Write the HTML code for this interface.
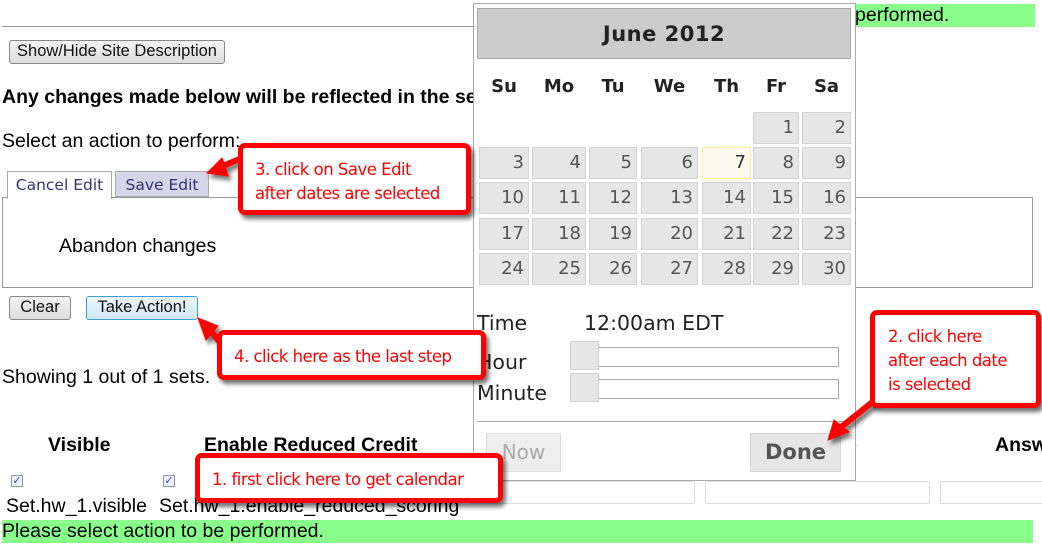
<!DOCTYPE html>
<html><head><style>
*{margin:0;padding:0;box-sizing:border-box}
body{width:1042px;height:555px;background:#fff;position:relative;overflow:hidden;font-family:"Liberation Sans",Arial,sans-serif;color:#000}
.a{position:absolute;white-space:nowrap}
.btn{position:absolute;border:1px solid #888;border-radius:3px;background:linear-gradient(#f4f4f4,#dcdcdc);font-size:16px;text-align:center;line-height:21px;color:#111}
.cal{position:absolute;left:473px;top:3px;width:383px;height:478px;border:1px solid #aaa;background:#fff}
.cell{position:absolute;background:#e6e6e6;border:1px solid #d3d3d3;color:#555;font-family:"DejaVu Sans",sans-serif;font-size:18px;text-align:right;padding-right:4px;line-height:29px}
.dn{position:absolute;top:72px;font-family:"DejaVu Sans",sans-serif;font-weight:bold;font-size:18px;color:#222;text-align:center}
.co{position:absolute;border:5px solid #f00;border-radius:7px;background:#fff;box-shadow:3px 4px 4px rgba(0,0,0,.55);color:#f00;font-size:16.5px;line-height:24px;font-family:"DejaVu Sans","Liberation Sans",sans-serif;letter-spacing:-0.5px}
.t{font-size:19.5px}
</style></head><body>
<div class="a" style="left:2px;top:26px;width:1033px;height:1px;background:#999"></div>
<div class="a" style="left:855px;top:4px;width:180px;height:23px;background:#8afe8a;font-size:19.5px;line-height:23px">performed.</div>
<div class="btn" style="left:9px;top:40px;width:216px;height:24px;font-size:16.5px">Show/Hide Site Description</div>
<div class="a t" style="left:2px;top:86px;font-weight:bold">Any changes made below will be reflected in the set</div>
<div class="a t" style="left:2px;top:130px">Select an action to perform:</div>
<div class="a" style="left:2px;top:197px;width:1031px;height:91px;border:1px solid #999"></div>
<div class="a" style="left:7px;top:171px;width:105px;height:28px;border:1px solid #aaa;border-bottom:none;background:#fff;color:#33337a;font-size:15.5px;text-align:center;line-height:27px;font-family:'DejaVu Sans',sans-serif">Cancel Edit</div>
<div class="a" style="left:115px;top:171px;width:94px;height:26px;border:1px solid #aaa;background:#d6d6ea;color:#33337a;font-size:15.5px;text-align:center;line-height:26px;font-family:'DejaVu Sans',sans-serif">Save Edit</div>
<div class="a t" style="left:59px;top:235px">Abandon changes</div>
<div class="btn" style="left:9px;top:296px;width:62px;height:24px;font-size:16.5px">Clear</div>
<div class="btn" style="left:86px;top:296px;width:112px;height:24px;font-size:16.5px;border-color:#3c9fd8;background:linear-gradient(#eef6fc,#cfe6f6)">Take Action!</div>
<div class="a t" style="left:2px;top:366px">Showing 1 out of 1 sets.</div>
<div class="a t" style="left:48px;top:434px;font-weight:bold">Visible</div>
<div class="a t" style="left:204px;top:434px;font-weight:bold">Enable Reduced Credit</div>
<div class="a t" style="left:846px;top:434px;font-weight:bold">e</div>
<div class="a t" style="left:995px;top:434px;font-weight:bold">Answ</div>
<div class="a" style="left:11px;top:475px;width:12px;height:12px;border:1px solid #8a9ab8;background:#eef;color:#3355aa;font-size:11px;line-height:10px;text-align:center">✓</div>
<div class="a" style="left:163px;top:475px;width:12px;height:12px;border:1px solid #8a9ab8;background:#eef;color:#3355aa;font-size:11px;line-height:10px;text-align:center">✓</div>
<div class="a t" style="left:6px;top:495px">Set.hw_1.visible</div>
<div class="a t" style="left:159px;top:495px">Set.hw_1.enable_reduced_scoring</div>
<div class="a" style="left:470px;top:481px;width:225px;height:23px;border:1px solid #ddd;border-radius:2px"></div>
<div class="a" style="left:705px;top:481px;width:225px;height:23px;border:1px solid #ddd;border-radius:2px"></div>
<div class="a" style="left:940px;top:481px;width:110px;height:23px;border:1px solid #ddd;border-radius:2px"></div>
<div class="a t" style="left:2px;top:520px;width:1031px;height:23px;background:#8afe8a;line-height:23px">Please select action to be performed.</div>

<div class="cal">
<div class="a" style="left:3px;top:4px;width:374px;height:51px;background:#ccc;border:1px solid #aaa;text-align:center;font-family:'DejaVu Sans',sans-serif;font-weight:bold;font-size:21px;line-height:50px;color:#222;letter-spacing:0.5px">June 2012</div>
<div class="dn" style="left:5px;width:50px">Su</div>
<div class="dn" style="left:58px;width:54px">Mo</div>
<div class="dn" style="left:115px;width:48px">Tu</div>
<div class="dn" style="left:167px;width:57px">We</div>
<div class="dn" style="left:228px;width:49px">Th</div>
<div class="dn" style="left:279px;width:46px">Fr</div>
<div class="dn" style="left:328px;width:49px">Sa</div>
<div id="g"></div>
<div class="a" style="left:3px;top:307px;font-family:'DejaVu Sans',sans-serif;font-size:20.5px;color:#222">Time</div>
<div class="a" style="left:110px;top:307px;font-family:'DejaVu Sans',sans-serif;font-size:20.5px;color:#222">12:00am EDT</div>
<div class="a" style="left:3px;top:346px;font-family:'DejaVu Sans',sans-serif;font-size:20.5px;color:#222">Hour</div>
<div class="a" style="left:3px;top:377px;font-family:'DejaVu Sans',sans-serif;font-size:20.5px;color:#222">Minute</div>
<div class="a" style="left:97px;top:343px;width:268px;height:20px;border:1px solid #aaa"></div>
<div class="a" style="left:96px;top:337px;width:29px;height:29px;border:1px solid #d3d3d3;background:#e6e6e6"></div>
<div class="a" style="left:97px;top:375px;width:268px;height:20px;border:1px solid #aaa"></div>
<div class="a" style="left:96px;top:369px;width:29px;height:29px;border:1px solid #d3d3d3;background:#e6e6e6"></div>
<div class="a" style="left:3px;top:417px;width:377px;height:1px;background:#aaa"></div>
<div class="a" style="left:12px;top:429px;width:75px;height:39px;border:1px solid #ddd;background:#eee;color:#aaa;font-family:'DejaVu Sans',sans-serif;font-size:20px;text-align:center;line-height:37px">Now</div>
<div class="a" style="left:276px;top:429px;width:91px;height:39px;border:1px solid #d3d3d3;background:#e6e6e6;color:#555;font-family:'DejaVu Sans',sans-serif;font-weight:bold;font-size:21px;text-align:center;line-height:37px">Done</div>
</div>

<svg class="a" style="left:0;top:0" width="1042" height="555">
<defs><filter id="s"><feDropShadow dx="3" dy="4" stdDeviation="2" flood-opacity=".55"/></filter></defs>
<g fill="#f00" stroke="#f00" filter="url(#s)">
<line x1="242" y1="158" x2="218" y2="168" stroke-width="6"/><polygon points="207,173 222,158 228,176"/>
<line x1="222" y1="345" x2="210" y2="330" stroke-width="6"/><polygon points="198,318 218,326 206,340"/>
<line x1="875" y1="400" x2="840" y2="428" stroke-width="6"/><polygon points="828,440 834,420 849,432"/>
</g></svg>
<div class="co" style="left:238px;top:143px;width:233px;height:72px;padding:10px 0 0 12px">3. click on Save Edit<br>after dates are selected</div>
<div class="co" style="left:217px;top:330px;width:269px;height:50px;padding:10px 0 0 12px">4. click here as the last step</div>
<div class="co" style="left:870px;top:310px;width:171px;height:98px;padding:10px 0 0 13px">2. click here<br>after each date<br>is selected</div>
<div class="co" style="left:195px;top:453px;width:308px;height:50px;padding:10px 0 0 12px">1. first click here to get calendar</div>
<script>
var cols=[[5,50],[58,54],[115,48],[167,57],[228,49],[279,46],[328,49]];
var rows=[108,143,178,214,249];var h='',d=1;
for(var r=0;r<5;r++)for(var c=0;c<7;c++){if(r==0&&c<5)continue;
var st=d==7?'background:#fbf9ee;border-color:#fcefa1;color:#333;':'';
h+='<div class="cell" style="'+st+'left:'+cols[c][0]+'px;top:'+rows[r]+'px;width:'+cols[c][1]+'px;height:32px">'+d+'</div>';d++;}
document.getElementById('g').innerHTML=h;
</script>
</body></html>
